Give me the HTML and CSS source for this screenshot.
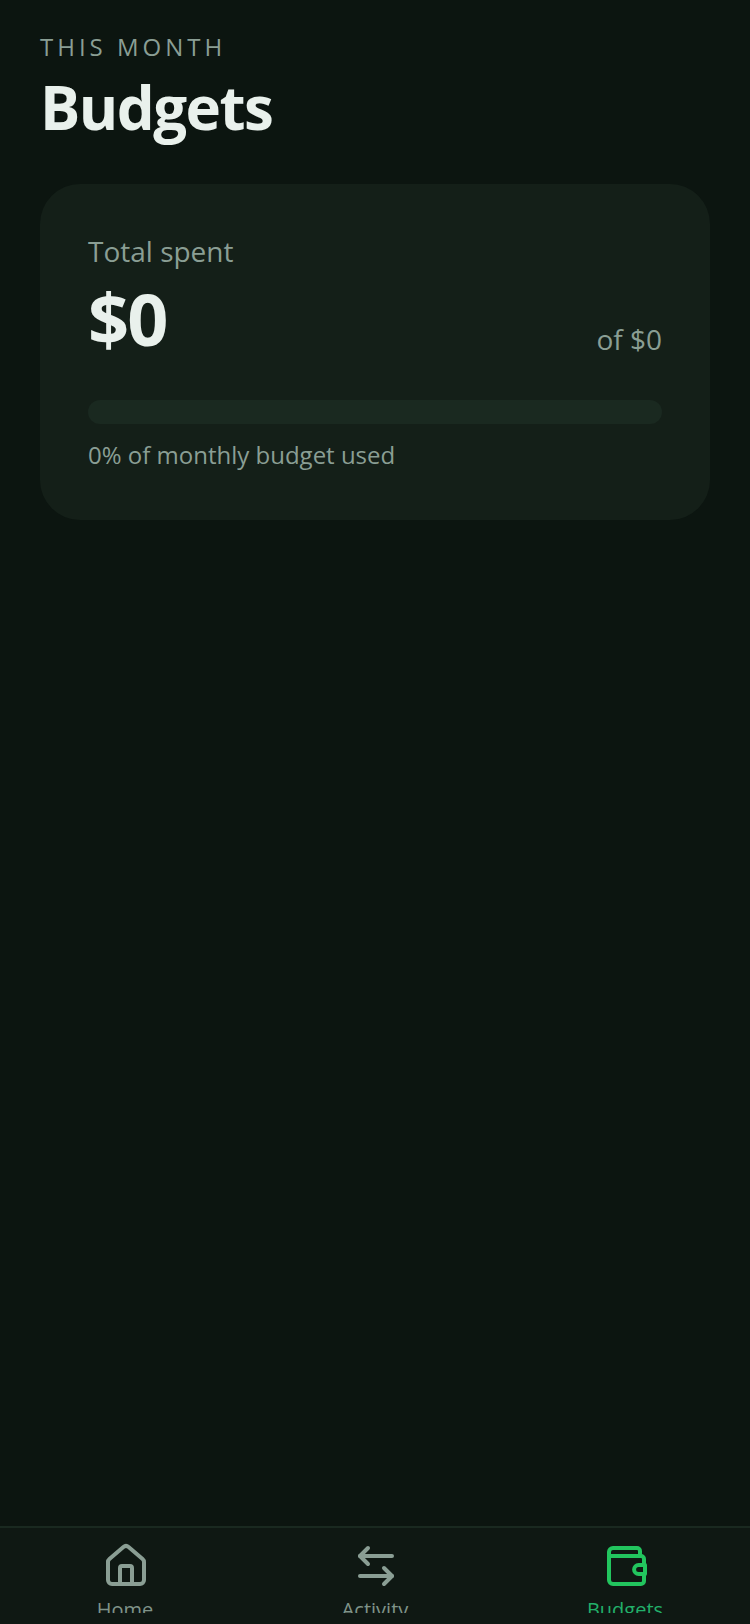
FILE: index.html
```html
<!DOCTYPE html>
<html lang="en">
<head>
  <meta charset="UTF-8">
  <meta name="viewport" content="width=device-width, initial-scale=1.0">
  <title>Budgets</title>
  <link rel="stylesheet" href="styles.css">
</head>
<body>
  <div class="app">
    <main class="content">
      <div class="eyebrow">THIS MONTH</div>
      <h1 class="title">Budgets</h1>
      <section class="card">
        <div class="card-label">Total spent</div>
        <div class="total-row">
          <span class="total-value">$0</span>
          <span class="total-of">of $0</span>
        </div>
        <div class="bar"></div>
        <div class="card-note">0% of monthly budget used</div>
      </section>
    </main>
    <nav class="tabs">
      <div class="tab">
        <svg class="tab-icon" viewBox="0 0 24 24"><path d="M15 21v-8a1 1 0 0 0-1-1h-4a1 1 0 0 0-1 1v8"/><path d="M3 10a2 2 0 0 1 .709-1.528l7-5.999a2 2 0 0 1 2.582 0l7 5.999A2 2 0 0 1 21 10v9a2 2 0 0 1-2 2H5a2 2 0 0 1-2-2z"/></svg>
        <span class="tab-label">Home</span>
      </div>
      <div class="tab">
        <svg class="tab-icon" viewBox="0 0 24 24"><path d="M8 3 4 7l4 4"/><path d="M4 7h16"/><path d="m16 21 4-4-4-4"/><path d="M20 17H4"/></svg>
        <span class="tab-label">Activity</span>
      </div>
      <div class="tab tab-active">
        <svg class="tab-icon" viewBox="0 0 24 24"><path d="M19 7V4.5A1.5 1.5 0 0 0 17.5 3H5.5a2 2 0 0 0-2 2v14a2 2 0 0 0 2 2h14a1.5 1.5 0 0 0 1.5-1.5V16"/><path d="M3.5 7h16a1.5 1.5 0 0 1 1.5 1.5v3"/><path d="M21.5 11.5h-3.2a2.25 2.25 0 0 0 0 4.5h3.2z"/></svg>
        <span class="tab-label">Budgets</span>
      </div>
    </nav>
  </div>
</body>
</html>
```

FILE: styles.css
```css
* {
  box-sizing: border-box;
}
html,
body {
  margin: 0;
  height: 100%;
}
body {
  background-color: #0c1510;
  font-family: "Open Sans", "Noto Sans", sans-serif;
}
.app {
  display: flex;
  flex-direction: column;
  height: 1624px;
}
.content {
  flex: 1;
  padding: 31px 40px 0;
}
.eyebrow {
  font-size: 24px;
  line-height: 32px;
  letter-spacing: 4px;
  color: #8a9e94;
}
.title {
  margin: 10px 0 0;
  font-size: 60px;
  line-height: 68px;
  font-weight: 700;
  letter-spacing: -1.5px;
  color: #e9f1ec;
}
.card {
  margin-top: 43px;
  padding: 48px;
  height: 336px;
  border-radius: 40px;
  background-color: #141f18;
}
.card-label {
  font-size: 28px;
  line-height: 38px;
  color: #8a9e94;
}
.total-row {
  display: flex;
  justify-content: space-between;
  align-items: flex-end;
  margin-top: 6px;
}
.total-value {
  font-size: 72px;
  line-height: 84px;
  font-weight: 700;
  letter-spacing: -2px;
  color: #e9f1ec;
}
.total-of {
  margin-bottom: 3px;
  font-size: 28px;
  line-height: 36px;
  color: #8a9e94;
}
.bar {
  height: 24px;
  margin-top: 40px;
  border-radius: 12px;
  background-color: #1a2920;
}
.card-note {
  margin-top: 15px;
  font-size: 24px;
  line-height: 32px;
  color: #8a9e94;
}
.tabs {
  display: flex;
  height: 98px;
  padding-top: 14px;
  border-top: 2px solid #1a2920;
  background-color: #0f1813;
}
.tab {
  flex: 1;
  display: flex;
  flex-direction: column;
  align-items: center;
  gap: 6px;
  height: 71px;
  overflow: hidden;
  color: #8a9e94;
}
.tab-active {
  color: #22c55e;
}
.tab-icon {
  flex: none;
  width: 48px;
  height: 48px;
  margin-left: 2px;
  fill: none;
  stroke: currentColor;
  stroke-width: 2;
  stroke-linecap: round;
  stroke-linejoin: round;
}
.tab-label {
  font-size: 20px;
  line-height: 28px;
  color: #7f9389;
}
.tab-active .tab-label {
  color: #22b06a;
}
```
